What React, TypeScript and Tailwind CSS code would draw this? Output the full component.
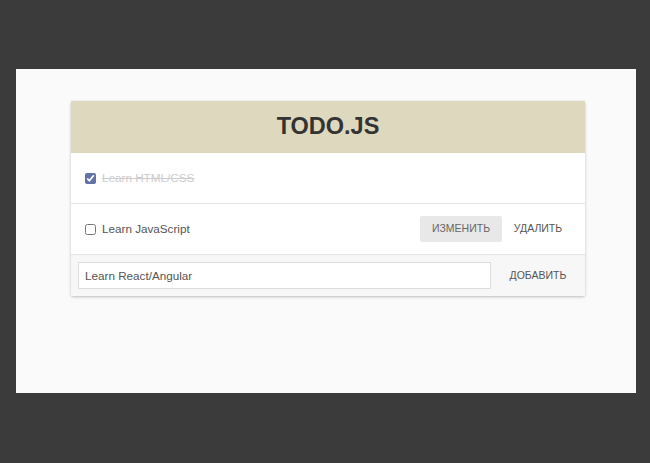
// Todo card : ---------------------------------------------------------------//
import { useState } from "react";

type Todo = { id: number; title: string; done: boolean };

export default function App() {
  const [todos, setTodos] = useState<Todo[]>([
    { id: 1, title: "Learn HTML/CSS", done: true },
    { id: 2, title: "Learn JavaScript", done: false },
  ]);
  const [draft, setDraft] = useState("Learn React/Angular");

  const toggle = (id: number) =>
    setTodos(todos.map((t) => (t.id === id ? { ...t, done: !t.done } : t)));

  return (
    <div
      className="h-[463px] w-[650px] bg-[#3b3b3b] pt-[69px] pl-4"
      style={{ fontFamily: '"Liberation Sans", Arial, sans-serif' }}
    >
      <div className="h-[324px] w-[620px] bg-[#fafafa] pt-8 pl-[55px]">
        <div className="w-[514px] bg-white shadow-[0_1px_3px_rgba(0,0,0,0.25)] rounded-[2px]">
          {/* entête */}
          <div className="flex h-[52px] items-center justify-center bg-[#ded8bf]">
            <h1 className="text-[23.5px] font-bold text-[#333333]">TODO.JS</h1>
          </div>

          {/* liste */}
          {todos.map((t, i) => (
            <div
              key={t.id}
              className="flex h-[51px] items-center border-b border-[#e4e4e4] pl-[14px] pr-[11px]"
            >
              <input
                type="checkbox"
                checked={t.done}
                onChange={() => toggle(t.id)}
                className="m-0 h-[11px] w-[11px] accent-[#6372a8]"
              />
              <span
                className={
                  "ml-[6px] text-[11.7px] " +
                  (t.done ? "text-[#cccccc] line-through" : "text-[#555555]")
                }
              >
                {t.title}
              </span>
              {i === 1 && (
                <div className="ml-auto flex items-center">
                  <button className="h-[26px] w-[82px] rounded-[2px] bg-[#e8e8e8] text-[10.5px] text-[#666666]">
                    ИЗМЕНИТЬ
                  </button>
                  <button className="h-[26px] w-[72px] text-[10.5px] text-[#555555]">
                    УДАЛИТЬ
                  </button>
                </div>
              )}
            </div>
          ))}

          {/* ajout */}
          <div className="flex h-[41px] items-center bg-[#f7f7f7] pl-[7px] pr-[11px]">
            <input
              type="text"
              value={draft}
              onChange={(e) => setDraft(e.target.value)}
              className="h-[27px] w-[413px] border border-[#dcdcdc] bg-white px-[6px] text-[11.7px] text-[#555555] outline-none"
            />
            <button className="ml-auto h-[26px] w-[72px] text-[10.5px] text-[#555555]">
              ДОБАВИТЬ
            </button>
          </div>
        </div>
      </div>
    </div>
  );
}
